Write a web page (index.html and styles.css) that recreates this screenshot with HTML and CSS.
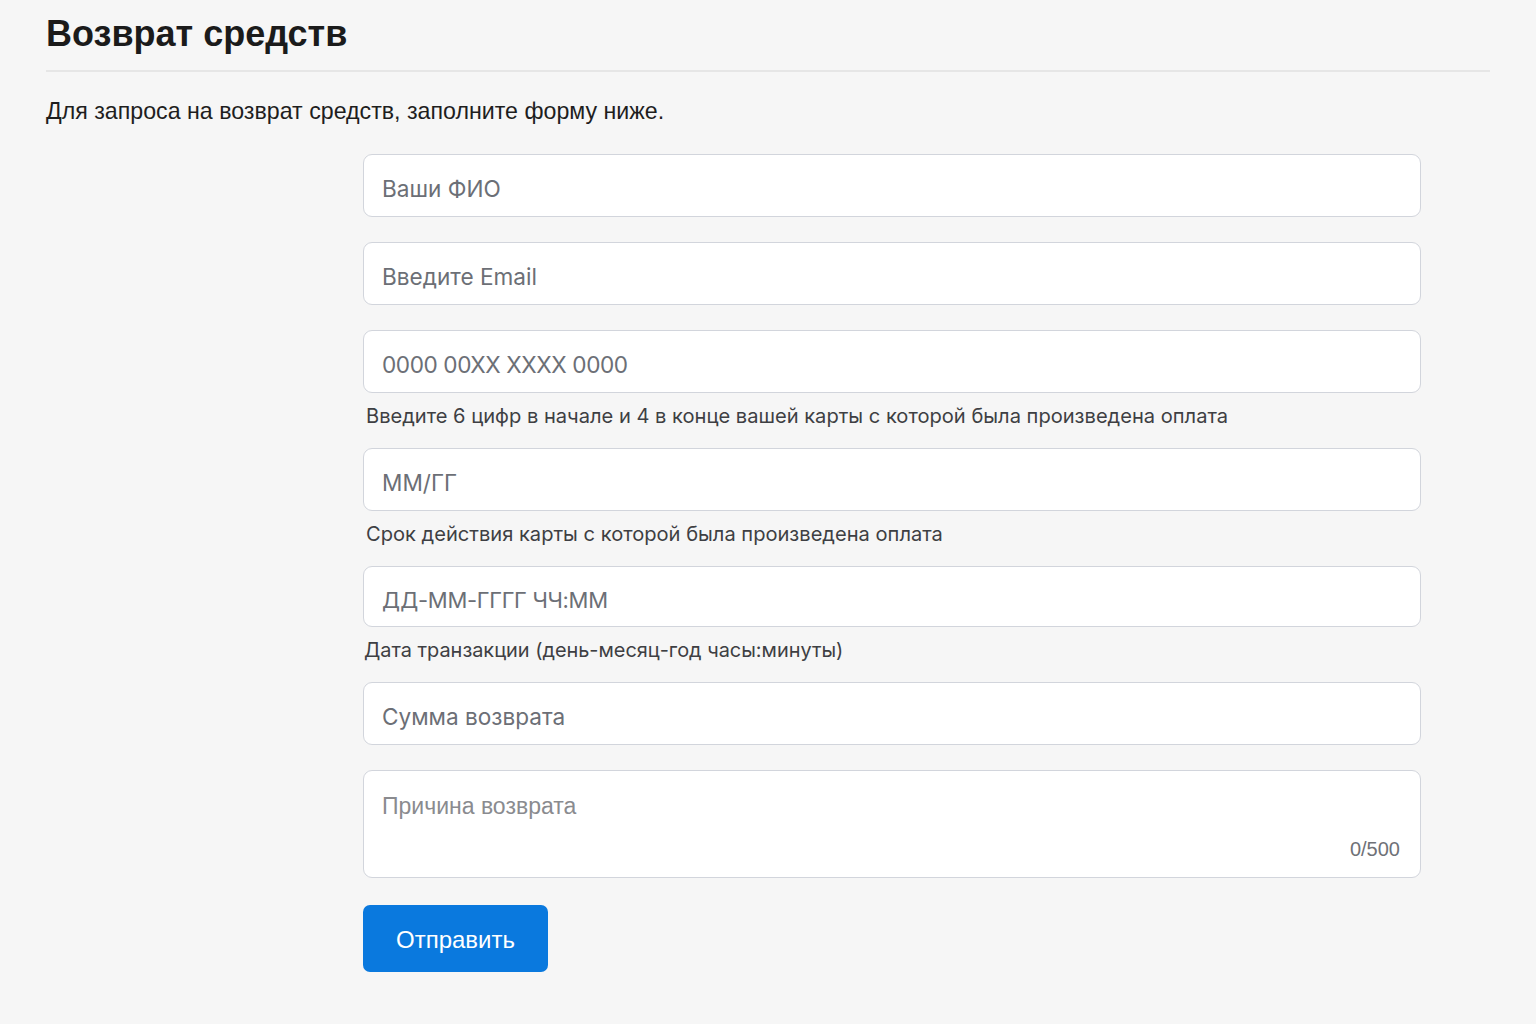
FILE: index.html
```html
<!DOCTYPE html>
<html lang="ru">
  <head>
    <meta charset="UTF-8" />
    <meta name="viewport" content="width=device-width, initial-scale=1.0" />
    <title>Возврат средств</title>
    <link rel="stylesheet" href="styles.css">
  </head>
  <body>
    <div class="page">
      <h1 class="pageTitle">Возврат средств</h1>
      <p class="pageIntro">Для запроса на возврат средств, заполните форму ниже.</p>

      <form class="refundForm">
        <div class="field">
          <input class="input" type="text" placeholder="Ваши ФИО">
        </div>
        <div class="field">
          <input class="input" type="email" placeholder="Введите Email">
        </div>
        <div class="field">
          <input class="input input_card" type="text" placeholder="0000 00XX XXXX 0000">
          <div class="hint">Введите 6 цифр в начале и 4 в конце вашей карты с которой была произведена оплата</div>
        </div>
        <div class="field">
          <input class="input" type="text" placeholder="ММ/ГГ">
          <div class="hint">Срок действия карты с которой была произведена оплата</div>
        </div>
        <div class="field">
          <input class="input input_short" type="text" placeholder="ДД-ММ-ГГГГ ЧЧ:ММ">
          <div class="hint hint_date">Дата транзакции (день-месяц-год часы:минуты)</div>
        </div>
        <div class="field">
          <input class="input" type="text" placeholder="Сумма возврата">
        </div>
        <div class="field">
          <div class="textareaBox">
            <textarea class="textarea" maxlength="500" placeholder="Причина возврата"></textarea>
            <span class="counter">0/500</span>
          </div>
        </div>
        <button class="submitBtn" type="submit">Отправить</button>
      </form>
    </div>
    <script>
      var textarea = document.querySelector('.textarea'),
        counter = document.querySelector('.counter');
      textarea.addEventListener('input', function() {
        counter.innerHTML = textarea.value.length + '/500';
      });
    </script>
  </body>
</html>
```

FILE: styles.css
```css
* {
  box-sizing: border-box;
}

body {
  margin: 0;
  background: #f6f6f6;
  font-family: "Liberation Sans", Arial, sans-serif;
  color: #1a1a1a;
}

.page {
  padding: 12px 46px 40px;
}

.pageTitle {
  margin: 0;
  padding-bottom: 14px;
  border-bottom: 2px solid #e6e6e6;
  font-size: 36px;
  line-height: 44px;
  font-weight: bold;
  color: #1b1b1b;
}

.pageIntro {
  margin: 24px 0 0;
  font-size: 23.2px;
  line-height: 30px;
  color: #1e1e1e;
}

.refundForm {
  display: flex;
  flex-direction: column;
  margin: 28px 0 0 317px;
  width: 1058px;
}

.field {
  display: flex;
  flex-direction: column;
  margin-bottom: 25px;
}

.input {
  width: 100%;
  height: 63px;
  padding: 6px 18px 0;
  border: 1.5px solid #d2d5dc;
  border-radius: 9px;
  background: #fff;
  font-family: Inter, "Noto Sans", sans-serif;
  font-size: 22.6px;
  color: #333;
  outline: none;
}
.input_card {
  letter-spacing: -0.4px;
}
.input_short {
  height: 61px;
  font-size: 22px;
  letter-spacing: -0.3px;
}
.input::placeholder {
  color: #6c6f76;
}

.hint {
  margin-top: 10px;
  margin-bottom: -6px;
  padding-left: 3px;
  font-family: Inter, "Noto Sans", sans-serif;
  font-size: 20.1px;
  line-height: 26px;
  color: #3e3f43;
}
.hint_date {
  padding-left: 1px;
  font-size: 19.9px;
}

.textareaBox {
  position: relative;
  height: 108px;
  border: 1.5px solid #d2d5dc;
  border-radius: 9px;
  background: #fff;
}
.textarea {
  display: block;
  width: 100%;
  height: 100%;
  padding: 22px 18px 20px;
  border: none;
  border-radius: 9px;
  background: transparent;
  resize: none;
  font-family: "Liberation Sans", Arial, sans-serif;
  font-size: 23px;
  color: #333;
  outline: none;
}
.textarea::placeholder {
  color: #8a8b8f;
}
.counter {
  position: absolute;
  right: 20px;
  bottom: 16px;
  font-size: 20px;
  color: #6f7177;
}

.submitBtn {
  align-self: flex-start;
  width: 185px;
  height: 67px;
  margin-top: 2px;
  padding-top: 4px;
  border: none;
  border-radius: 7px;
  background: #0a79de;
  font-family: "Liberation Sans", Arial, sans-serif;
  font-size: 24px;
  color: #fff;
  cursor: pointer;
}
```
